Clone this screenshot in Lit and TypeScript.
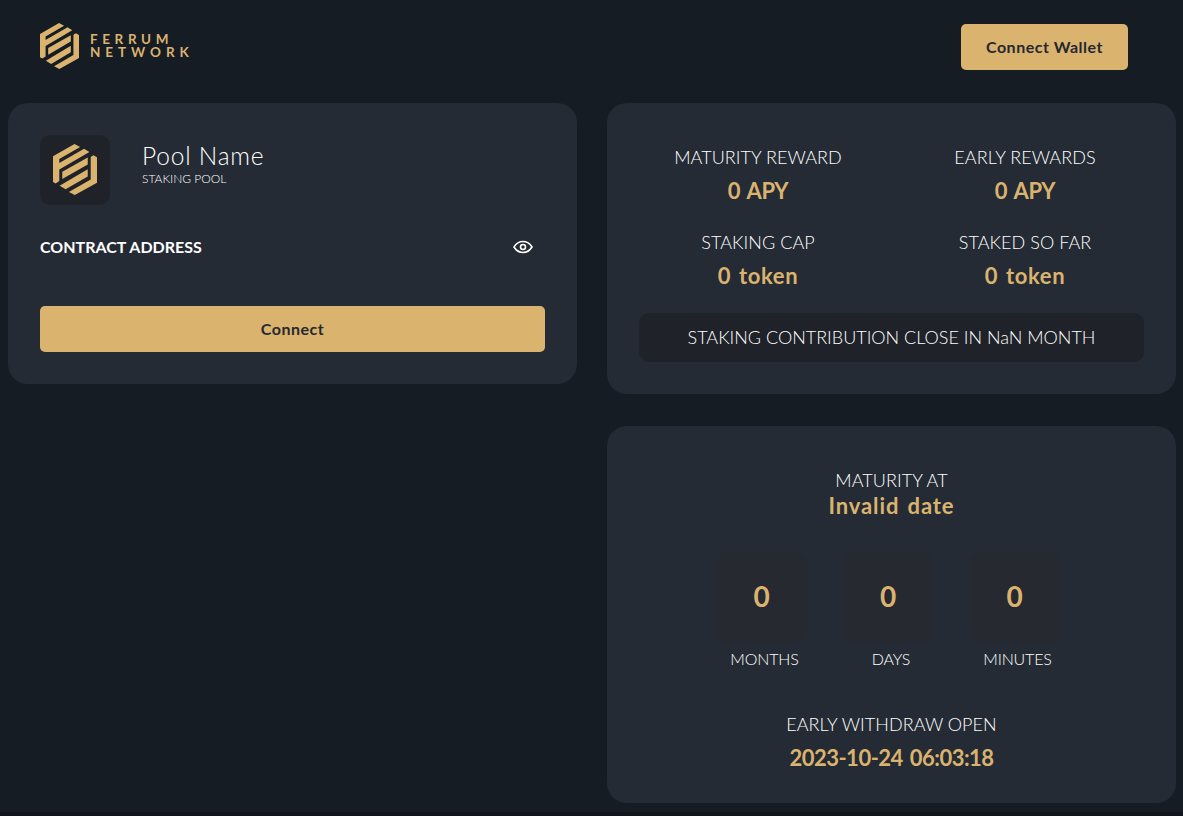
import { LitElement, html, css } from "lit";
import { customElement } from "lit/decorators.js";

@customElement("ferrum-mark")
class FerrumMark extends LitElement {
  static styles = css`
    :host { display: block; }
    svg { display: block; width: 100%; height: 100%; }
  `;
  render() {
    return html`<svg viewBox="69 56 133 154" preserveAspectRatio="none" fill="#dab36f">
      <path d="M69 93 L134 56 L151 65 L88 101 V113 L163 70 L179 80 L88 133 V168 L77 175 L69 171Z" />
      <path d="M97 140 L174 97 V118 L97 162Z" />
      <path d="M174 132 V154 L107 193 L89 182Z" />
      <path d="M183 95 L191 90 L202 96 V173 L135 210 L117 201 L183 163Z" />
    </svg>`;
  }
}

@customElement("app-root")
class AppRoot extends LitElement {
  static styles = css`
    :host { display: block; background: #161c23; color: #fff;
      font-family: Lato, "Open Sans", sans-serif; box-sizing: border-box; overflow: hidden;
      border-bottom: 4px solid #11141b; height: 816px; }
    * { box-sizing: border-box; }
    header { height: 103px; display: flex; justify-content: space-between; align-items: flex-start; padding: 23px 55px 0 40px; }
    .brand { display: flex; }
    .brand ferrum-mark { width: 39px; height: 46px; }
    .word { margin: 10px 0 0 11px; color: #dab36f; font-weight: 700; font-size: 13.5px; line-height: 13px; }
    .w1 { letter-spacing: 4.6px; }
    .w2 { letter-spacing: 4.95px; }
    button { font: 700 16px/24px Lato, sans-serif; letter-spacing: 0.5px; color: #25282f; background: #dab36f; border: 0; border-radius: 5px; height: 46px; padding: 0; display: block; }
    .wallet { width: 167px; margin-top: 1px; }
    .connect { width: 100%; }
    main { display: grid; grid-template-columns: 569px 569px; gap: 30px; padding-left: 8px; align-items: start; }
    .col { display: grid; gap: 32px; }
    .card { background: #252b34; border-radius: 20px; padding: 32px; }
    .pool { height: 281px; }
    .row { display: flex; }
    .tile { width: 70px; height: 70px; border-radius: 10px; background: #1f2229; padding: 9px 13px 10px; }
    .tile ferrum-mark { width: 44px; height: 51px; }
    .names { margin-left: 32px; }
    .name { font-size: 24.5px; line-height: 30px; margin-top: 6px; font-weight: 300; letter-spacing: 0.8px; }
    .sub { font-size: 12px; line-height: 16px; font-weight: 300; }
    .addr { display: flex; justify-content: space-between; align-items: center; height: 24px; margin: 30px 12px 47px 0; font-weight: 700; font-size: 16px; }
    .addr span { padding-bottom: 2px; }
    .addr svg { width: 20px; height: 14px; display: block; }
    .stats { height: 291px; }
    .grid { display: grid; grid-template-columns: 238px 238px; column-gap: 29px; height: 178px; grid-auto-rows: 85px; padding-top: 10px; text-align: center; }
    .label { font-size: 18px; line-height: 25px; font-weight: 300; letter-spacing: 0.06px; }
    .value { font-size: 22px; line-height: 28px; font-weight: 700; color: #dab36f; margin-top: 7px; letter-spacing: -0.3px; word-spacing: 2px; }
    .wide { letter-spacing: 0.6px; }
    .date { letter-spacing: -0.5px; }
    .close { background: #1f2229; border-radius: 10px; height: 49px; display: flex; align-items: center; justify-content: center; font-size: 18px; font-weight: 300; padding-bottom: 2px; }
    .maturity { height: 377px; text-align: center; padding-top: 42px; }
    .tight { margin-top: -1px; letter-spacing: 0.9px; }
    .timers { display: flex; justify-content: center; gap: 36.5px; margin-top: 32px; padding-right: 7px; }
    .box { width: 90px; height: 90px; border-radius: 10px; background: #272931; color: #dab36f; font-weight: 700; font-size: 28px; line-height: 89px; }
    .unit { font-size: 16px; line-height: 20px; margin-top: 7px; padding-left: 6px; font-weight: 300; white-space: nowrap; letter-spacing: -0.15px; }
    .early { margin-top: 43px; }
    span { white-space: nowrap; }
  `;

  stat(label: string, value: string, wide = false) {
    return html`<div><div class="label">${label}</div><div class="value ${wide ? "wide" : ""}">${value}</div></div>`;
  }
  timer(unit: string) {
    return html`<div><div class="box">0</div><div class="unit">${unit}</div></div>`;
  }
  render() {
    return html`
      <header>
        <div class="brand"><ferrum-mark></ferrum-mark>
          <div class="word"><div class="w1">FERRUM</div><div class="w2">NETWORK</div></div></div>
        <button class="wallet">Connect Wallet</button>
      </header>
      <main>
        <section class="card pool">
          <div class="row"><div class="tile"><ferrum-mark></ferrum-mark></div>
            <div class="names"><div class="name">Pool Name</div><div class="sub">STAKING POOL</div></div></div>
          <div class="addr"><span>CONTRACT ADDRESS</span>
            <svg viewBox="0 0 20 14" fill="none" stroke="#fff" stroke-width="1.6"><path d="M1 7 C5.5 -0.3 14.5 -0.3 19 7 C14.5 14.3 5.5 14.3 1 7Z" /><circle cx="10" cy="7" r="2.5" /></svg></div>
          <button class="connect">Connect</button>
        </section>
        <div class="col">
          <section class="card stats">
            <div class="grid">
              ${this.stat("MATURITY REWARD", "0 APY")}${this.stat("EARLY REWARDS", "0 APY")}
              ${this.stat("STAKING CAP", "0 token", true)}${this.stat("STAKED SO FAR", "0 token", true)}
            </div>
            <div class="close"><span>STAKING CONTRIBUTION CLOSE IN NaN MONTH</span></div>
          </section>
          <section class="card maturity">
            <div class="label">MATURITY AT</div><div class="value tight">Invalid date</div>
            <div class="timers">${this.timer("MONTHS")}${this.timer("DAYS")}${this.timer("MINUTES")}</div>
            <div class="label early">EARLY WITHDRAW OPEN</div><div class="value date">2023-10-24 06:03:18</div>
          </section>
        </div>
      </main>`;
  }
}
